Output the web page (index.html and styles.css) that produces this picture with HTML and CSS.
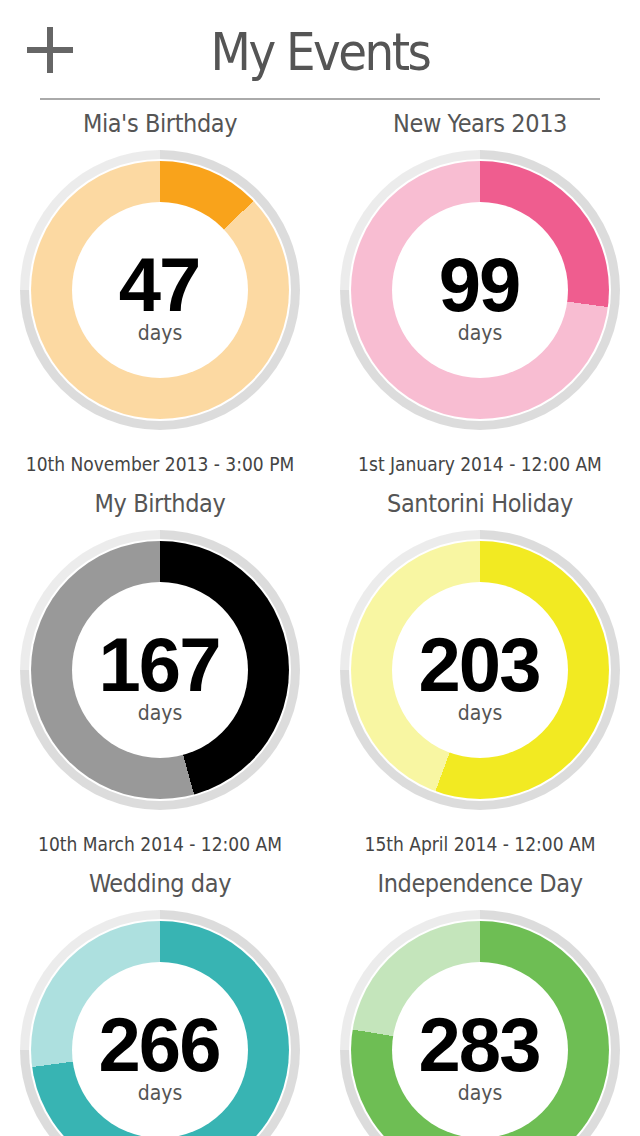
FILE: index.html
```html
<!DOCTYPE html>
<html>

<head>
    <title>My Events</title>
    <link rel="stylesheet" href="styles.css">
</head>

<body>
    <div class="app">
        <div class="header">
            <button class="add-btn" type="button" aria-label="Add event">
                <svg width="46" height="46" viewBox="0 0 46 46">
                    <rect x="0" y="20" width="46" height="6" fill="#666"/>
                    <rect x="20" y="0" width="6" height="46" fill="#666"/>
                </svg>
            </button>
            <h1>My Events</h1>
            <span></span>
        </div>

        <div class="events">
            <div class="event orange">
                <div class="name">Mia's Birthday</div>
                <div class="ring">
                    <div class="track">
                        <div class="fill" style="--p: 46.4deg">
                            <div class="center">
                                <span class="count">47</span>
                                <span class="unit">days</span>
                            </div>
                        </div>
                    </div>
                </div>
                <div class="date">10th November 2013 - 3:00 PM</div>
            </div>

            <div class="event pink">
                <div class="name">New Years 2013</div>
                <div class="ring">
                    <div class="track">
                        <div class="fill" style="--p: 97.6deg">
                            <div class="center">
                                <span class="count">99</span>
                                <span class="unit">days</span>
                            </div>
                        </div>
                    </div>
                </div>
                <div class="date">1st January 2014 - 12:00 AM</div>
            </div>

            <div class="event black">
                <div class="name">My Birthday</div>
                <div class="ring">
                    <div class="track">
                        <div class="fill" style="--p: 164.7deg">
                            <div class="center">
                                <span class="count">167</span>
                                <span class="unit">days</span>
                            </div>
                        </div>
                    </div>
                </div>
                <div class="date">10th March 2014 - 12:00 AM</div>
            </div>

            <div class="event yellow">
                <div class="name">Santorini Holiday</div>
                <div class="ring">
                    <div class="track">
                        <div class="fill" style="--p: 200.2deg">
                            <div class="center">
                                <span class="count">203</span>
                                <span class="unit">days</span>
                            </div>
                        </div>
                    </div>
                </div>
                <div class="date">15th April 2014 - 12:00 AM</div>
            </div>

            <div class="event teal">
                <div class="name">Wedding day</div>
                <div class="ring">
                    <div class="track">
                        <div class="fill" style="--p: 262.4deg">
                            <div class="center">
                                <span class="count">266</span>
                                <span class="unit">days</span>
                            </div>
                        </div>
                    </div>
                </div>
            </div>

            <div class="event green">
                <div class="name">Independence Day</div>
                <div class="ring">
                    <div class="track">
                        <div class="fill" style="--p: 279.1deg">
                            <div class="center">
                                <span class="count">283</span>
                                <span class="unit">days</span>
                            </div>
                        </div>
                    </div>
                </div>
            </div>
        </div>
    </div>
</body>

</html>
```

FILE: styles.css
```css
body {
    margin: 0;
    padding: 0;
    background-color: #fff;
    font-family: "DejaVu Sans Condensed", "DejaVu Sans", sans-serif;
    font-stretch: condensed;
    color: #555;
}

.app {
    width: 640px;
    height: 1136px;
    overflow: hidden;
}

.header {
    display: grid;
    grid-template-columns: 1fr auto 1fr;
    align-items: start;
    height: 98px;
    margin: 0 40px;
    border-bottom: 2px solid #aaa;
}

.add-btn {
    justify-self: start;
    margin: 27px 0 0 -13px;
    padding: 0;
    border: none;
    background: none;
    width: 46px;
    height: 46px;
    cursor: pointer;
}

.add-btn svg {
    display: block;
}

h1 {
    margin: 22px 0 0;
    font-size: 52px;
    line-height: 60px;
    letter-spacing: -2.5px;
    font-weight: normal;
    color: #555;
}

.events {
    display: grid;
    grid-template-columns: 1fr 1fr;
}

.event {
    display: flex;
    flex-direction: column;
    align-items: center;
    padding: 8px 0 3px;
    height: 380px;
    box-sizing: border-box;
}

.name {
    height: 32px;
    line-height: 32px;
    font-size: 25px;
    letter-spacing: -0.4px;
    color: #555;
    white-space: nowrap;
}

.ring {
    margin-top: 10px;
    width: 280px;
    height: 280px;
    padding: 9px;
    box-sizing: border-box;
    border-radius: 50%;
    background: conic-gradient(#dcdcdc 0deg 270deg, #ececec 270deg 360deg);
}

.track {
    height: 100%;
    padding: 2px;
    box-sizing: border-box;
    border-radius: 50%;
    background-color: #fff;
}

.fill {
    height: 100%;
    padding: 41px;
    box-sizing: border-box;
    border-radius: 50%;
    background: conic-gradient(var(--dark) 0deg var(--p), var(--light) var(--p) 360deg);
}

.center {
    height: 100%;
    box-sizing: border-box;
    padding-top: 47px;
    border-radius: 50%;
    background-color: #fff;
    display: flex;
    flex-direction: column;
    align-items: center;
}

.count {
    font-family: "Liberation Sans", Arial, sans-serif;
    font-size: 76px;
    line-height: 72px;
    font-weight: bold;
    letter-spacing: -2px;
    padding-right: 2px;
    color: #000;
}

.unit {
    font-size: 21px;
    line-height: 24px;
    color: #555;
}

.date {
    margin-top: 21px;
    height: 26px;
    line-height: 26px;
    font-size: 19px;
    color: #444;
    white-space: nowrap;
}

.orange { --dark: #f9a31b; --light: #fcd9a2; }
.pink { --dark: #ef5d8f; --light: #f8bdd2; }
.black { --dark: #000; --light: #999; }
.yellow { --dark: #f2ea22; --light: #f8f6a2; }
.teal { --dark: #38b4b3; --light: #ade0df; }
.green { --dark: #6ebe54; --light: #c4e5bb; }
```
